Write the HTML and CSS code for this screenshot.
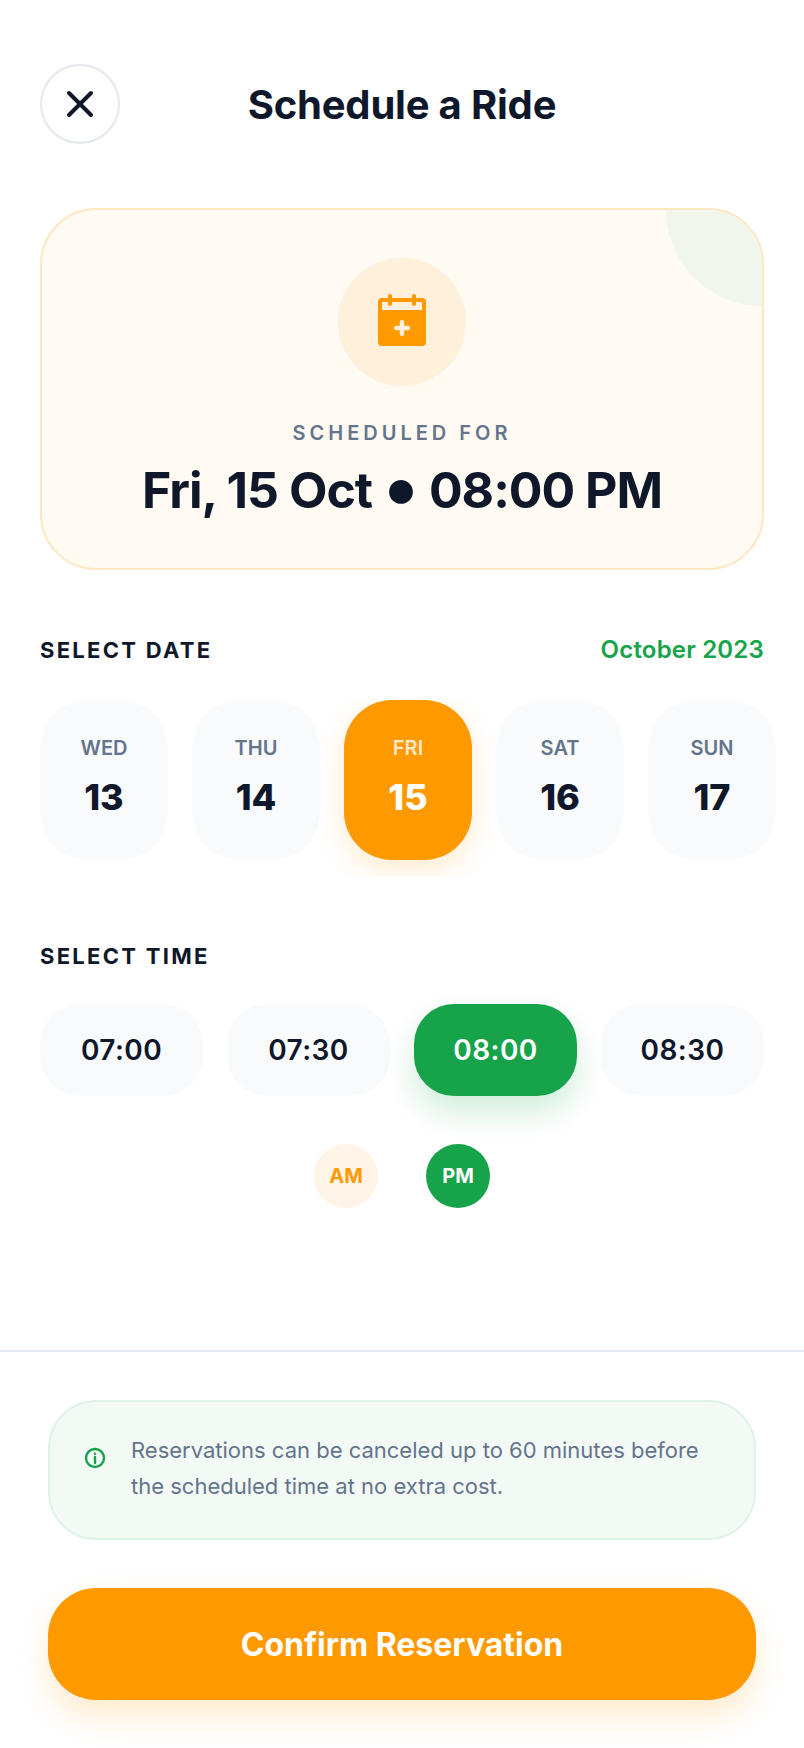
FILE: index.html
```html
<!DOCTYPE html>
<html lang="en">
<head>
    <meta charset="UTF-8">
    <meta name="viewport" content="width=device-width, initial-scale=1.0">
    <title>Schedule a Ride</title>
    <link rel="stylesheet" href="styles.css">
</head>
<body>
    <div class="page">
        <header class="header">
            <button class="close-btn" aria-label="Close">
                <svg width="36" height="36" viewBox="0 0 36 36" fill="none" stroke="#0f172a" stroke-width="4" stroke-linecap="round">
                    <path d="M7 7 L29 29 M29 7 L7 29"/>
                </svg>
            </button>
            <h1>Schedule a Ride</h1>
        </header>

        <section class="summary">
            <div class="summary-blob"></div>
            <div class="summary-icon">
                <svg width="48" height="52" viewBox="0 0 48 52">
                    <rect x="0" y="4" width="48" height="48" rx="4" fill="#ff9900"/>
                    <rect x="4" y="8" width="40" height="8" fill="#fff0dc"/>
                    <rect x="10" y="0" width="4" height="12" rx="2" fill="#ff9900"/>
                    <rect x="34" y="0" width="4" height="12" rx="2" fill="#ff9900"/>
                    <path d="M24 28.250 V39.750 M18.250 34 H29.750" stroke="#fff0dc" stroke-width="4.500" stroke-linecap="round"/>
                </svg>
            </div>
            <p class="summary-label">SCHEDULED FOR</p>
            <p class="summary-value">Fri, 15 Oct <span class="dot">•</span> 08:00 PM</p>
        </section>

        <div class="section-head section-head-date">
            <h2>SELECT DATE</h2>
            <span class="month">October 2023</span>
        </div>
        <div class="date-row">
            <div class="date-card"><span class="day">WED</span><span class="num">13</span></div>
            <div class="date-card"><span class="day">THU</span><span class="num">14</span></div>
            <div class="date-card active"><span class="day">FRI</span><span class="num">15</span></div>
            <div class="date-card"><span class="day">SAT</span><span class="num">16</span></div>
            <div class="date-card"><span class="day">SUN</span><span class="num">17</span></div>
        </div>

        <div class="section-head section-head-time">
            <h2>SELECT TIME</h2>
        </div>
        <div class="time-row">
            <div class="time-chip">07:00</div>
            <div class="time-chip">07:30</div>
            <div class="time-chip active">08:00</div>
            <div class="time-chip">08:30</div>
        </div>

        <div class="period-row">
            <div class="period am">AM</div>
            <div class="period pm">PM</div>
        </div>

        <footer class="footer">
            <div class="notice">
                <svg class="notice-icon" width="22" height="22" viewBox="0 0 22 22" fill="none" stroke="#16a34a" stroke-width="2.400">
                    <circle cx="11" cy="11" r="9"/>
                    <path d="M11 10 V16" stroke-linecap="round"/>
                    <circle cx="11" cy="6.800" r="0.500" stroke-width="1.600"/>
                </svg>
                <p>Reservations can be canceled up to 60 minutes before the scheduled time at no extra cost.</p>
            </div>
            <button class="confirm-btn">Confirm Reservation</button>
        </footer>
    </div>
</body>
</html>
```

FILE: styles.css
```css
* {
    box-sizing: border-box;
}

body {
    margin: 0;
    background-color: #fff;
    font-family: Inter, "Liberation Sans", sans-serif;
    color: #0f172a;
}

.page {
    width: 804px;
    height: 1748px;
    display: flex;
    flex-direction: column;
    overflow: hidden;
}

.header {
    display: grid;
    grid-template-columns: 80px 1fr 80px;
    align-items: center;
    padding: 64px 40px 0;
}

.header h1 {
    margin: 0;
    font-size: 40px;
    font-weight: 700;
    letter-spacing: -0.2px;
    text-align: center;
}

.close-btn {
    width: 80px;
    height: 80px;
    padding: 0;
    display: flex;
    align-items: center;
    justify-content: center;
    background: #fff;
    border: 2px solid #e2e8f0;
    border-radius: 50%;
}

.summary {
    position: relative;
    overflow: hidden;
    margin: 64px 40px 0;
    height: 362px;
    padding-top: 48px;
    background-color: #fffaf2;
    border: 2px solid #ffe6c2;
    border-radius: 56px;
    text-align: center;
}

.summary-blob {
    position: absolute;
    top: -96px;
    right: -96px;
    width: 192px;
    height: 192px;
    border-radius: 50%;
    background-color: #f1f6ec;
}

.summary-icon {
    width: 128px;
    height: 128px;
    margin: 0 auto;
    display: flex;
    align-items: center;
    justify-content: center;
    background-color: #fff0dc;
    border-radius: 50%;
}

.summary-icon svg {
    margin-bottom: 4px;
}

.summary-label {
    margin: 34px 0 0;
    font-size: 20px;
    line-height: 26px;
    font-weight: 600;
    letter-spacing: 4px;
    color: #64748b;
}

.summary-value {
    margin: 13px 0 0;
    font-size: 50px;
    line-height: 62px;
    font-weight: 700;
    letter-spacing: -1px;
}

.dot {
    font-size: 76px;
    line-height: 0;
    vertical-align: -6px;
}

.section-head {
    display: flex;
    justify-content: space-between;
    align-items: center;
    padding: 0 40px;
}

.section-head-date {
    margin-top: 64px;
}

.section-head-time {
    margin-top: 64px;
}

.section-head h2 {
    margin: 0;
    font-size: 22px;
    line-height: 32px;
    font-weight: 700;
    letter-spacing: 2.3px;
}

.month {
    font-size: 24px;
    line-height: 32px;
    font-weight: 600;
    letter-spacing: 0.2px;
    color: #16a34a;
}

.date-row {
    display: flex;
    gap: 24px;
    margin-top: 34px;
    padding: 0 0 16px 40px;
    overflow: hidden;
}

.date-card {
    flex: 0 0 128px;
    height: 160px;
    padding-bottom: 8px;
    display: flex;
    flex-direction: column;
    align-items: center;
    justify-content: center;
    gap: 13px;
    background-color: #f8fafc;
    border-radius: 48px;
}

.date-card .day {
    font-size: 20px;
    line-height: 28px;
    font-weight: 600;
    color: #64748b;
}

.date-card .num {
    font-size: 36px;
    line-height: 44px;
    font-weight: 800;
}

.date-card.active {
    background-color: #ff9900;
    box-shadow: 0 10px 30px rgba(255, 153, 0, 0.2);
}

.date-card.active .day {
    color: rgba(255, 255, 255, 0.8);
}

.date-card.active .num {
    color: #fff;
}

.time-row {
    display: flex;
    gap: 24px;
    margin: 32px 40px 0;
}

.time-chip {
    flex: 1 1 0;
    height: 92px;
    display: flex;
    align-items: center;
    justify-content: center;
    background-color: #f8fafc;
    border-radius: 40px;
    font-size: 28px;
    font-weight: 600;
    letter-spacing: 0.45px;
}

.time-chip.active {
    background-color: #16a34a;
    color: #fff;
    box-shadow: 0 16px 32px rgba(22, 163, 74, 0.2);
}

.period-row {
    display: flex;
    justify-content: center;
    gap: 48px;
    margin-top: 48px;
}

.period {
    width: 64px;
    height: 64px;
    display: flex;
    align-items: center;
    justify-content: center;
    border-radius: 50%;
    font-size: 20px;
    font-weight: 700;
}

.period.am {
    background-color: #fff4e5;
    color: #ff9900;
}

.period.pm {
    background-color: #16a34a;
    color: #fff;
}

.footer {
    margin-top: auto;
    padding: 48px;
    border-top: 2px solid #e2e8f0;
}

.notice {
    display: flex;
    align-items: flex-start;
    gap: 25px;
    height: 140px;
    padding: 30px 34px 0;
    background-color: #f3f9f5;
    border: 2px solid #dff2e8;
    border-radius: 48px;
}

.notice-icon {
    flex: none;
    margin-top: 15px;
}

.notice p {
    margin: 0;
    font-size: 22px;
    line-height: 36px;
    color: #64748b;
}

.confirm-btn {
    display: block;
    width: 100%;
    height: 112px;
    margin-top: 48px;
    background-color: #ff9900;
    border: none;
    border-radius: 48px;
    box-shadow: 0 16px 32px rgba(255, 153, 0, 0.2);
    font-family: inherit;
    font-size: 32px;
    font-weight: 700;
    color: #fff;
}
```
